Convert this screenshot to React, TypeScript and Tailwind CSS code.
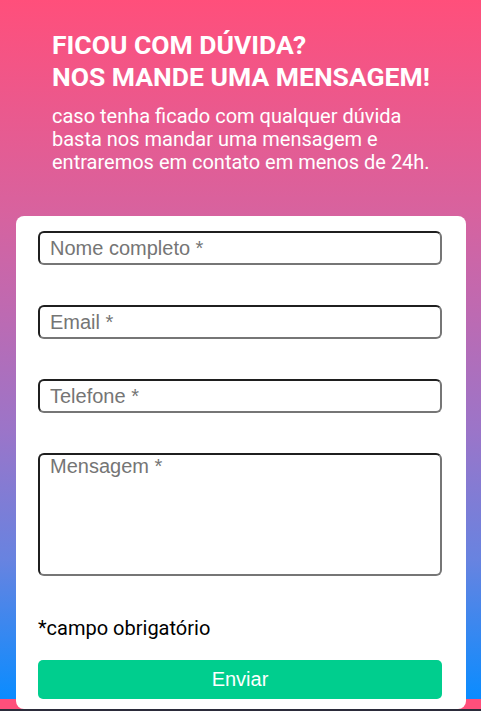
import React from "react";

export default function App() {
  const inputCls =
    "block w-[404px] h-[34px] border-2 border-solid border-t-[#1f1f1f] border-l-[#1f1f1f] border-r-[#767676] border-b-[#767676] rounded-[6px] pl-[10px] pr-2 text-[20px] text-black placeholder:text-[#757575] outline-none bg-white";
  return (
    <div className="w-[481px] h-[711px] overflow-hidden flex flex-col bg-[#ff4f7b]">
      <div className="h-[699px] shrink-0 bg-[linear-gradient(#ff4f7b_0%,#d8629e_30%,#bd6ab2_45%,#9a75c9_62%,#6883e0_80%,#0a8cff_100%)] flex flex-col">
        <div className="pl-[52px] pt-[29px] text-white [font-family:Roboto,'Noto_Sans',sans-serif]">
          <h1 className="text-[26.5px] leading-[31.5px] font-bold">
            <span className="block">FICOU COM DÚVIDA?</span>
            <span className="block">NOS MANDE UMA MENSAGEM!</span>
          </h1>
          <p className="mt-[12.5px] text-[20px] leading-[23.4px]">
            <span className="block">caso tenha ficado com qualquer dúvida</span>
            <span className="block">basta nos mandar uma mensagem e</span>
            <span className="block">entraremos em contato em menos de 24h.</span>
          </p>
        </div>
        <div className="relative mt-[41.5px] ml-[16px] w-[450px] bg-white rounded-[8px] pt-[15px] pb-[10px] px-[22px] shrink-0 [font-family:'Liberation_Sans',Arial,sans-serif]">
          <input className={inputCls} placeholder="Nome completo *" />
          <input className={inputCls + " mt-[40px]"} placeholder="Email *" />
          <input className={inputCls + " mt-[40px]"} placeholder="Telefone *" />
          <textarea
            className="mt-[40px] block w-[404px] h-[123px] resize-none border-2 border-solid border-t-[#1f1f1f] border-l-[#1f1f1f] border-r-[#767676] border-b-[#767676] rounded-[6px] pl-[10px] pr-2 pt-0 text-[20px] leading-[23px] text-black placeholder:text-[#757575] outline-none bg-white"
            placeholder="Mensagem *"
          />
          <p className="mt-[40.5px] text-[20px] leading-[23.4px] text-black [font-family:Roboto,'Noto_Sans',sans-serif]">
            *campo obrigatório
          </p>
          <button className="mt-[20px] block w-[404px] h-[39px] rounded-[5px] bg-[#00ce8e] text-white text-[20px] leading-[39px] text-center">
            Enviar
          </button>
        </div>
      </div>
      <div className="h-[10px] shrink-0 bg-[#ff4f7b]" />
      <div className="flex-1 bg-[#2b2b3a]" />
    </div>
  );
}
